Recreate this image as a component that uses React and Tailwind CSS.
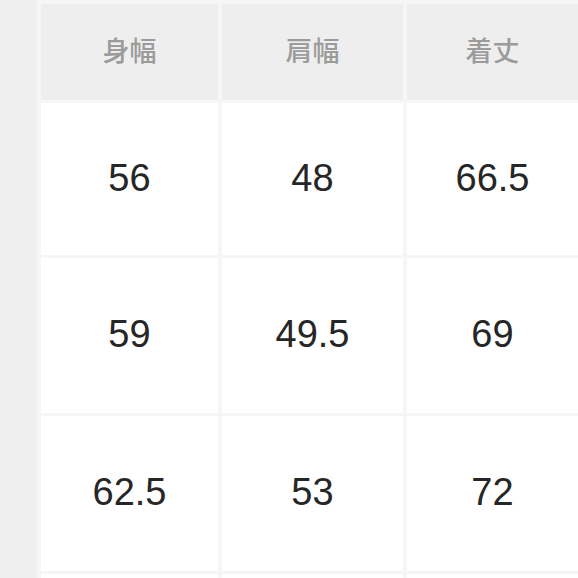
import React from 'react';

const headers = ['身幅', '肩幅', '着丈'];
const rows = [
  ['56', '48', '66.5'],
  ['59', '49.5', '69'],
  ['62.5', '53', '72'],
  ['', '', ''],
];

export default function App() {
  return (
    <div
      className="flex w-[578px] h-[578px] overflow-hidden bg-[#f6f6f6] gap-x-[4px]"
      style={{ fontFamily: '"Liberation Sans", Arial, "Noto Sans CJK JP", sans-serif' }}
    >
      {/* cut-off size column */}
      <div className="w-[37px] shrink-0 bg-[#efefef]" />

      <div className="flex-1 pt-[4px] grid grid-cols-[177px_181px_1fr] grid-rows-[96px_152px_155px_155px_1fr] gap-x-[4px] gap-y-[3px]">
        {headers.map((h) => (
          <div
            key={h}
            className="flex items-center justify-center bg-[#eeeeee] text-[27px] font-medium text-[#9b9b9b] pb-[3px]"
            style={{ fontFamily: '"Noto Sans CJK JP", "Noto Sans CJK SC", sans-serif' }}
          >
            {h}
          </div>
        ))}
        {rows.map((r, i) =>
          r.map((v, j) => (
            <div
              key={i + '-' + j}
              className="flex items-center justify-center bg-white text-[38px] text-[#262626] pb-[2px]"
            >
              {v}
            </div>
          ))
        )}
      </div>
    </div>
  );
}
